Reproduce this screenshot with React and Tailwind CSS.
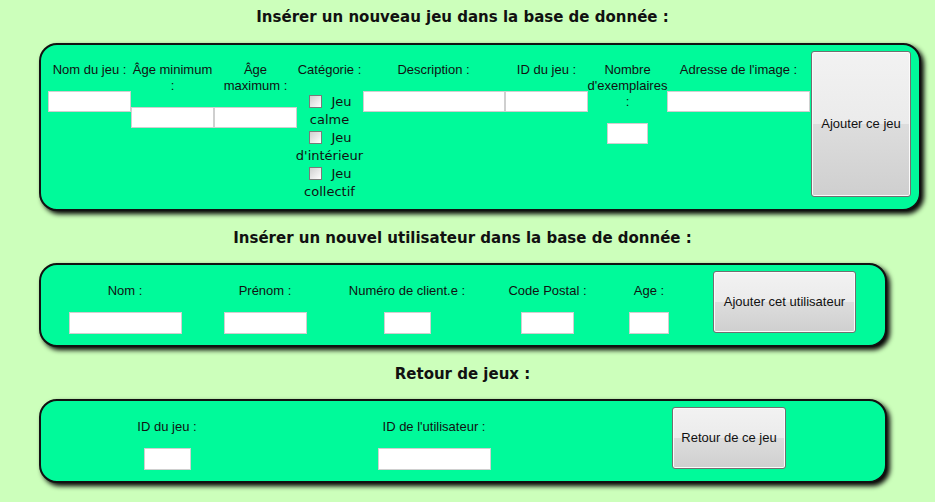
import React from "react";

const sans = "font-['Liberation_Sans',Arial,sans-serif]";
const verdana = "font-['DejaVu_Sans',Verdana,sans-serif]";

const panel =
  "ml-[39px] box-border border-2 border-[#111] rounded-[18px] bg-[#00fa9a] shadow-[3px_3px_5px_#000]";

const field =
  "block box-border h-[21px] bg-white border border-[#cfcfcf] outline-none";

const button =
  "box-border border border-[#707070] rounded-[3px] bg-[linear-gradient(#f2f2f2,#ebebeb_50%,#dddddd_50%,#cfcfcf)] shadow-[inset_0_0_0_1px_#fbfbfb] text-[13px] text-[#111] " +
  sans;

const Heading = ({ children, className = "" }) => (
  <h2
    className={`w-[925px] h-[20px] text-center text-[15px] leading-[20px] font-bold text-[#111] ${verdana} ${className}`}
  >
    {children}
  </h2>
);

// one column of the first form : label lines, then the field
const GameCol = ({ w, lines, inputW }) => (
  <div className={`flex flex-col items-center mt-[11px] ${w}`}>
    <label className={`text-center text-[13px] leading-[16px] text-[#111] whitespace-nowrap ${sans}`}>
      {lines.map((l, i) => (
        <span key={i} className="block">
          {l}
        </span>
      ))}
    </label>
    <input type="text" className={`${field} mt-[13px] ${inputW}`} />
  </div>
);

const Check = ({ first, second }) => (
  <div className="flex flex-col items-center">
    <div className="flex items-center h-[19px] gap-[9px] pl-[2px]">
      <span className="block w-[13px] h-[13px] box-border border border-[#7a7a7a] bg-gradient-to-br from-[#cfcfcf] to-white" />
      <span>{first}</span>
    </div>
    <div className="h-[17px] leading-[17px]">{second}</div>
  </div>
);

// one column of the two small forms
const SmallCol = ({ w, label, inputW }) => (
  <div className={`flex flex-col items-center mt-[12px] ${w}`}>
    <label className={`text-[13px] leading-[16px] text-[#111] whitespace-nowrap ${sans}`}>
      {label}
    </label>
    <input type="text" className={`${field} h-[22px] mt-[13px] ${inputW}`} />
  </div>
);

export default function App() {
  return (
    <div className="min-h-screen bg-[#ccffbb] pt-[7px] pb-[10px]">
      {/* JEUX */}
      <Heading>Insérer un nouveau jeu dans la base de donnée :</Heading>
      <div className={`${panel} w-[882px] h-[168px] mt-[16px] pt-[6px] pl-[7px]`}>
        <div className="flex items-start">
          <GameCol w="w-[83px]" lines={["Nom du jeu :"]} inputW="w-[83px]" />
          <GameCol w="w-[83px]" lines={["Âge minimum", ":"]} inputW="w-[83px]" />
          <GameCol w="w-[83px]" lines={["Âge", "maximum :"]} inputW="w-[83px]" />

          <div className="flex flex-col items-center mt-[11px] w-[65px]">
            <label className={`text-[13px] leading-[16px] text-[#111] whitespace-nowrap ${sans}`}>
              Catégorie :
            </label>
            <div className={`mt-[14px] text-[13px] text-[#111] whitespace-nowrap ${verdana}`}>
              <Check first="Jeu" second="calme" />
              <Check first="Jeu" second="d'intérieur" />
              <Check first="Jeu" second="collectif" />
            </div>
          </div>

          <GameCol w="w-[143px]" lines={["Description :"]} inputW="w-[142px]" />
          <GameCol w="w-[83px]" lines={["ID du jeu :"]} inputW="w-[83px]" />
          <GameCol w="w-[79px]" lines={["Nombre", "d'exemplaires", ":"]} inputW="w-[41px]" />
          <GameCol w="w-[143px]" lines={["Adresse de l'image :"]} inputW="w-[143px]" />

          <button className={`${button} ml-[1px] w-[100px] h-[146px]`}>Ajouter ce jeu</button>
        </div>
      </div>

      {/* UTILISATEURS */}
      <Heading className="mt-[17px]">Insérer un nouvel utilisateur dans la base de donnée :</Heading>
      <div className={`${panel} w-[848px] h-[84px] mt-[15px] pt-[6px]`}>
        <div className="flex items-start">
          <SmallCol w="w-[168px]" label="Nom :" inputW="w-[113px]" />
          <SmallCol w="w-[112px]" label="Prénom :" inputW="w-[83px]" />
          <SmallCol w="w-[172px]" label="Numéro de client.e :" inputW="w-[47px]" />
          <SmallCol w="w-[109px]" label="Code Postal :" inputW="w-[53px]" />
          <SmallCol w="w-[94px]" label="Age :" inputW="w-[40px]" />
          <button className={`${button} ml-[17px] w-[143px] h-[62px]`}>Ajouter cet utilisateur</button>
        </div>
      </div>

      {/* RETOURS */}
      <Heading className="mt-[17px]">Retour de jeux :</Heading>
      <div className={`${panel} w-[848px] h-[84px] mt-[15px] pt-[6px]`}>
        <div className="flex items-start">
          <SmallCol w="w-[252px]" label="ID du jeu :" inputW="w-[47px]" />
          <SmallCol w="w-[282px]" label="ID de l'utilisateur :" inputW="w-[113px]" />
          <button className={`${button} ml-[97px] w-[114px] h-[62px]`}>Retour de ce jeu</button>
        </div>
      </div>
    </div>
  );
}
